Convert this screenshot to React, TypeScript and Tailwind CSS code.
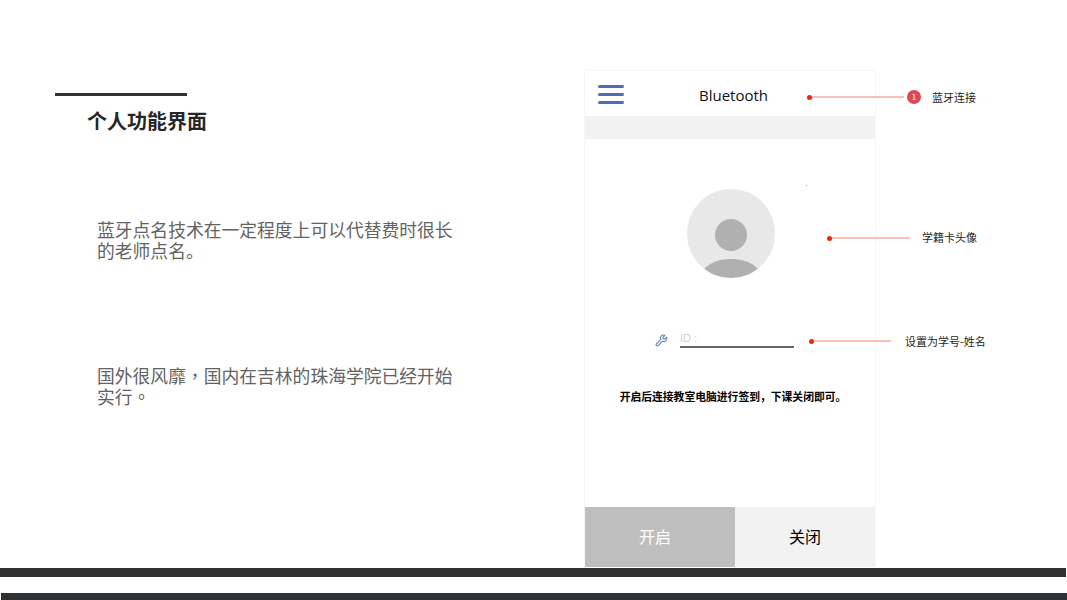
import { Wrench } from 'lucide-react'

const cjk = "font-['Noto_Sans_CJK_SC','Liberation_Sans',sans-serif]"

function Dot() {
  return <span className="h-[5px] w-[5px] shrink-0 rounded-full bg-[#e8280f]" />
}

function Lead({ className }: { className: string }) {
  return <span className={`h-[2px] bg-[#fbc0b6] ${className}`} />
}

export default function App() {
  return (
    <div className={`relative flex h-[600px] w-[1067px] flex-col overflow-hidden bg-white ${cjk}`}>
      <div className="flex h-[568px] shrink-0">
        {/* left text column */}
        <div className="w-[584px] shrink-0 pl-[55px] pt-[93px]">
          <div className="h-[3px] w-[132px] bg-[#2b3238]" />
          <h1 className="ml-[32px] mt-[10px] text-[20px] font-bold leading-[30px] text-[#262626]">个人功能界面</h1>
          <p className="ml-[42px] mt-[83px] w-[358px] text-[17.8px] leading-[21px] text-[#636363]">
            蓝牙点名技术在一定程度上可以代替费时很长的老师点名。
          </p>
          <p className="ml-[42px] mt-[104px] w-[358px] font-['Noto_Sans_CJK_TC',sans-serif] text-[17.8px] leading-[21px] text-[#636363]">
            国外很风靡，国内在吉林的珠海学院已经开始实行。
          </p>
        </div>

        {/* phone */}
        <div className="mt-[70px] flex h-[497px] w-[292px] shrink-0 flex-col border-x border-t border-[#f6f6f6]">
          <div className="relative flex h-[45px] shrink-0 items-center justify-center pl-[7px] pt-[4px]">
            <div className="absolute left-[13px] top-[14px] flex w-[26px] flex-col gap-[5px]">
              <span className="h-[3px] rounded-sm bg-[#4f6eb0]" />
              <span className="h-[3px] rounded-sm bg-[#4f6eb0]" />
              <span className="h-[3px] rounded-sm bg-[#4f6eb0]" />
            </div>
            <span className="font-['Open_Sans',sans-serif] text-[15px] text-[#111]">Bluetooth</span>
          </div>
          <div className="h-[23px] shrink-0 bg-[#f2f2f2]" />

          <div className="flex flex-1 flex-col items-center pt-[50px]">
            <div className="relative ml-[2px] h-[89px] w-[88px] overflow-hidden rounded-full bg-[#e8e8e8]">
              <div className="absolute left-[28px] top-[30px] h-[32px] w-[32px] rounded-full bg-[#b0b0b0]" />
              <div className="absolute left-[14px] top-[70px] h-[36px] w-[60px] rounded-[50%] bg-[#b0b0b0]" />
            </div>

            <div className="ml-[-11px] mt-[53px] flex items-end gap-[12px]">
              <Wrench className="mb-[1px] h-[13px] w-[13px] text-[#5f7fc2]" strokeWidth={2} />
              <div className="h-[17px] w-[114px] border-b-2 border-[#666] font-['Liberation_Sans',sans-serif] text-[11px] leading-[15px] text-[#cfcfcf]">
                ID :
              </div>
            </div>

            <p className="ml-[6px] mt-[41px] text-[10.8px] font-bold leading-[14px] text-black">
              开启后连接教室电脑进行签到，下课关闭即可。
            </p>
          </div>

          <div className="flex h-[60px] shrink-0">
            <div className="flex w-[150px] items-center justify-center bg-[#bebebe] pb-[3px] pr-[10px] text-[16px] text-white">开启</div>
            <div className="flex flex-1 items-center justify-center bg-[#f2f2f2] pb-[3px] text-[16px] text-black">关闭</div>
          </div>
        </div>
      </div>

      {/* bottom bars */}
      <div className="h-[9px] w-[1066px] shrink-0 bg-[#2f3133]" />
      <div className="ml-[1px] mt-[16px] h-[7px] shrink-0 bg-[#2f3133]" />

      {/* annotations */}
      <div className="absolute left-[806px] top-[185px] h-px w-px bg-[#999]" />
      <div className="absolute left-[807px] top-[89px] flex h-[16px] items-center">
        <Dot />
        <Lead className="w-[92px]" />
        <span className="ml-[3px] flex h-[14px] w-[14px] items-center justify-center rounded-full bg-[#e0485a] text-[8px] text-white">1</span>
        <span className="ml-[11px] text-[11px] leading-[16px] text-[#262626]">蓝牙连接</span>
      </div>
      <div className="absolute left-[827px] top-[230px] flex h-[16px] items-center">
        <Dot />
        <Lead className="w-[78px]" />
        <span className="mb-[2px] ml-[12px] text-[11px] leading-[16px] text-[#262626]">学籍卡头像</span>
      </div>
      <div className="absolute left-[809px] top-[333px] flex h-[16px] items-center">
        <Dot />
        <Lead className="w-[77px]" />
        <span className="ml-[14px] text-[11px] leading-[16px] text-[#262626]">设置为学号-姓名</span>
      </div>
    </div>
  )
}
